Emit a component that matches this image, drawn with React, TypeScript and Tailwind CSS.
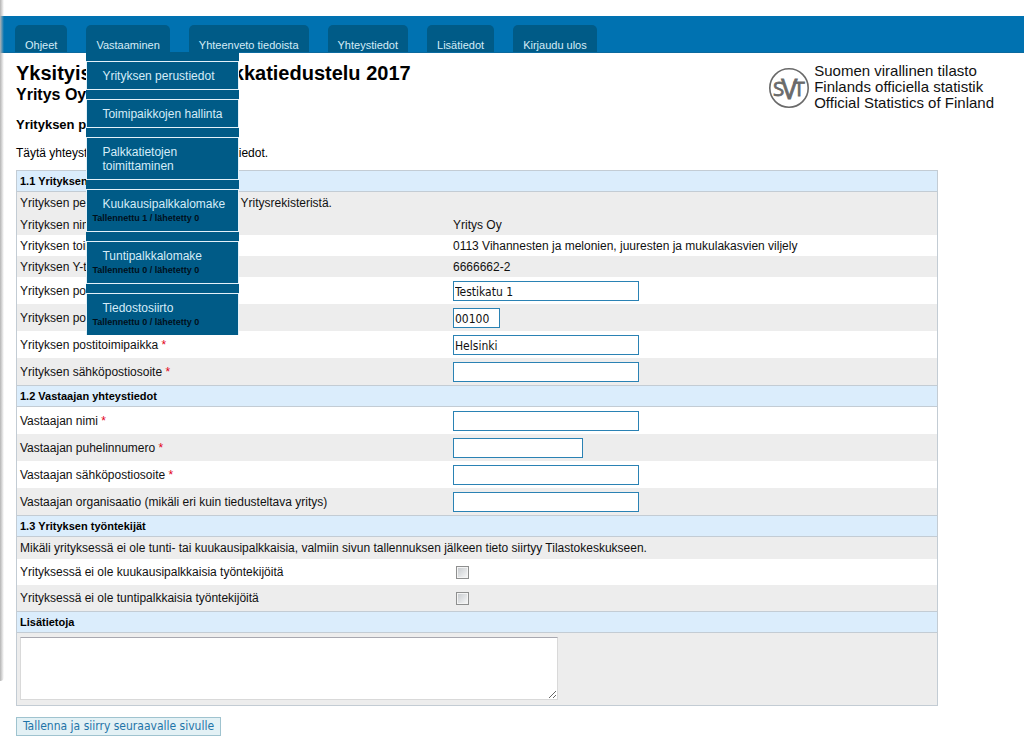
import type { ReactNode } from 'react';

const tabs = ['Ohjeet', 'Vastaaminen', 'Yhteenveto tiedoista', 'Yhteystiedot', 'Lisätiedot', 'Kirjaudu ulos'];

const menu: { label: string; status?: string }[] = [
  { label: 'Yrityksen perustiedot' },
  { label: 'Toimipaikkojen hallinta' },
  { label: 'Palkkatietojen toimittaminen' },
  { label: 'Kuukausipalkkalomake', status: 'Tallennettu 1 / lähetetty 0' },
  { label: 'Tuntipalkkalomake', status: 'Tallennettu 0 / lähetetty 0' },
  { label: 'Tiedostosiirto', status: 'Tallennettu 0 / lähetetty 0' },
];

function DropMenu() {
  return (
    <ul className="absolute top-full left-0 z-10 w-[153px] bg-[#005b87] pt-[9px] text-[12px]">
      {menu.map((item, i) => (
        <li key={item.label} className={i < menu.length - 1 ? 'border-b-[9px] border-[#005b87]' : ''}>
          <div
            className={
              'border-x border-t border-[#e3f1f9] ' + (i < menu.length - 1 ? 'border-b' : '')
            }
          >
            <a href="#" className="block px-[15px] pt-[7px] pb-1.5 leading-[14px] text-[#d5ecf8]">
              {item.label}
              {item.status && (
                <span className="-ml-2.5 block w-[130px] text-[9px] leading-[14px] font-bold whitespace-nowrap text-[#00101c]">
                  {item.status}
                </span>
              )}
            </a>
          </div>
        </li>
      ))}
    </ul>
  );
}

function SectionHeader({ children }: { children: ReactNode }) {
  return (
    <h3 className="h-[22px] border-y border-[#c3ccd4] bg-[#dbedfc] px-[3px] text-[11px] leading-5 font-bold text-black">
      {children}
    </h3>
  );
}

function Info({ children }: { children: ReactNode }) {
  return <p className="h-[22px] bg-[#ededed] px-[3px] leading-[22px]">{children}</p>;
}

function Value({ label, value, shaded }: { label: string; value: string; shaded?: boolean }) {
  return (
    <div className={'flex h-[21px] items-center gap-0.5 pl-[3px] ' + (shaded ? 'bg-[#ededed]' : 'bg-white')}>
      <span className="w-[47%]">{label}</span>
      <span>{value}</span>
    </div>
  );
}

function Field(props: {
  id: string;
  label: string;
  value?: string;
  width?: string;
  required?: boolean;
  shaded?: boolean;
}) {
  const { id, label, value, width = 'w-[186px]', required, shaded } = props;
  return (
    <div className={'flex h-[27px] items-center gap-0.5 pl-[3px] ' + (shaded ? 'bg-[#ededed]' : 'bg-white')}>
      <label htmlFor={id} className="w-[47%]">
        {label} {required && <span className="text-[#e2001a]">*</span>}
      </label>
      <input
        id={id}
        type="text"
        defaultValue={value}
        className={
          "h-5 border border-[#2a82b4] bg-white px-px pt-0.5 font-['DejaVu_Sans_Condensed','DejaVu_Sans',sans-serif] text-[12px] outline-none " +
          width
        }
      />
    </div>
  );
}

function Check({ id, label, shaded }: { id: string; label: string; shaded?: boolean }) {
  return (
    <div className={'flex h-[26px] items-center gap-0.5 pl-[3px] ' + (shaded ? 'bg-[#ededed]' : 'bg-white')}>
      <label htmlFor={id} className="w-[47%]">
        {label}
      </label>
      <input
        id={id}
        type="checkbox"
        className="ml-[3px] size-[13px] appearance-none border border-[#8e8f8f] bg-linear-to-br from-[#c4c8cc] to-[#fafafa] shadow-[inset_0_0_0_1px_#f4f4f4]"
      />
    </div>
  );
}

function Logo() {
  return (
    <div className="flex items-start gap-1 pt-2.5 pr-[30px]">
      <svg viewBox="0 0 42 42" className="mt-1 size-[42px]" aria-label="SVT">
        <circle cx="21" cy="21" r="19.2" fill="none" stroke="#6a6a6a" strokeWidth="1.6" />
        <g fill="#6a6a6a" stroke="#6a6a6a" strokeWidth="0.8" fontFamily="Open Sans, sans-serif">
          <text x="5" y="29" fontSize="20.5">S</text>
          <text x="13.2" y="32" fontSize="27">V</text>
          <text x="25.5" y="29" fontSize="20.5">T</text>
        </g>
      </svg>
      <p className="text-[15px] leading-4">
        Suomen virallinen tilasto
        <br />
        Finlands officiella statistik
        <br />
        Official Statistics of Finland
      </p>
    </div>
  );
}

export default function App() {
  return (
    <div className="relative min-h-screen bg-white pt-4 font-['Liberation_Sans',Arial,sans-serif] text-[12px] text-[#111]">
      <div className="absolute top-0 bottom-14 left-0 w-1 rounded-br-sm bg-linear-to-r from-[#b4b4b4] to-transparent" />
      <nav className="h-[37px] border-b border-[#0a6a9f] bg-[#0072b1] pt-[9px] pl-[15px]">
        <ul className="flex gap-[19px] text-[11px]">
          {tabs.map((tab) => (
            <li key={tab} className="relative">
              <a
                href="#"
                className="block h-[27px] rounded-t-[5px] bg-[#005b87] px-2.5 pt-[13px] leading-[14px] text-[#d5ecf8]"
              >
                {tab}
              </a>
              {tab === 'Vastaaminen' && <DropMenu />}
            </li>
          ))}
        </ul>
      </nav>

      <header className="flex items-start justify-between pl-4">
        <div className="text-black">
          <h1 className="pt-2 text-[20px] leading-6 font-bold">Yksityisen sektorin palkkatiedustelu 2017</h1>
          <p className="text-[16px] leading-5 font-bold">Yritys Oy</p>
          <h2 className="pt-3 text-[13px] leading-4 font-bold">Yrityksen perustiedot</h2>
          <p className="pt-3 leading-4">Täytä yhteystiedot ja tarkista yrityksenne tiedot.</p>
        </div>
        <Logo />
      </header>

      <form className="mt-[9px] mr-[86px] ml-4">
        <div className="border-x border-b border-[#c3ccd4]">
          <SectionHeader>1.1 Yrityksen perustiedot</SectionHeader>
          <Info>Yrityksen perustiedot tulevat lomakkeelle Yritysrekisteristä.</Info>
          <Value label="Yrityksen nimi" value="Yritys Oy" shaded />
          <Value label="Yrityksen toimiala" value="0113 Vihannesten ja melonien, juuresten ja mukulakasvien viljely" />
          <Value label="Yrityksen Y-tunnus" value="6666662-2" shaded />
          <Field id="katu" label="Yrityksen postiosoite" value="Testikatu 1" required />
          <Field id="postinro" label="Yrityksen postinumero" value="00100" width="w-[47px]" required shaded />
          <Field id="toimipaikka" label="Yrityksen postitoimipaikka" value="Helsinki" required />
          <Field id="sposti" label="Yrityksen sähköpostiosoite" required shaded />

          <SectionHeader>1.2 Vastaajan yhteystiedot</SectionHeader>
          <Field id="v-nimi" label="Vastaajan nimi" required />
          <Field id="v-puh" label="Vastaajan puhelinnumero" width="w-[130px]" required shaded />
          <Field id="v-sposti" label="Vastaajan sähköpostiosoite" required />
          <Field id="v-org" label="Vastaajan organisaatio (mikäli eri kuin tiedusteltava yritys)" shaded />

          <SectionHeader>1.3 Yrityksen työntekijät</SectionHeader>
          <Info>
            Mikäli yrityksessä ei ole tunti- tai kuukausipalkkaisia, valmiin sivun tallennuksen jälkeen tieto siirtyy
            Tilastokeskukseen.
          </Info>
          <Check id="ei-kk" label="Yrityksessä ei ole kuukausipalkkaisia työntekijöitä" />
          <Check id="ei-tunti" label="Yrityksessä ei ole tuntipalkkaisia työntekijöitä" shaded />

          <SectionHeader>
            <label htmlFor="lisatietoja">Lisätietoja</label>
          </SectionHeader>
          <div className="bg-[#ededed] px-[3px] pt-1 pb-[5px]">
            <textarea
              id="lisatietoja"
              className="block h-[63px] w-[538px] border border-[#d9d9d9] border-t-[#a8a8b0] bg-white outline-none"
            />
          </div>
        </div>
        <button
          type="button"
          className="mt-[11px] block h-[19px] border border-[#9fc3cf] bg-[#e3f1f5] px-1.5 font-['DejaVu_Sans_Condensed','DejaVu_Sans',sans-serif] text-[12px] leading-[17px] text-[#1f74a8]"
        >
          Tallenna ja siirry seuraavalle sivulle
        </button>
      </form>
    </div>
  );
}
